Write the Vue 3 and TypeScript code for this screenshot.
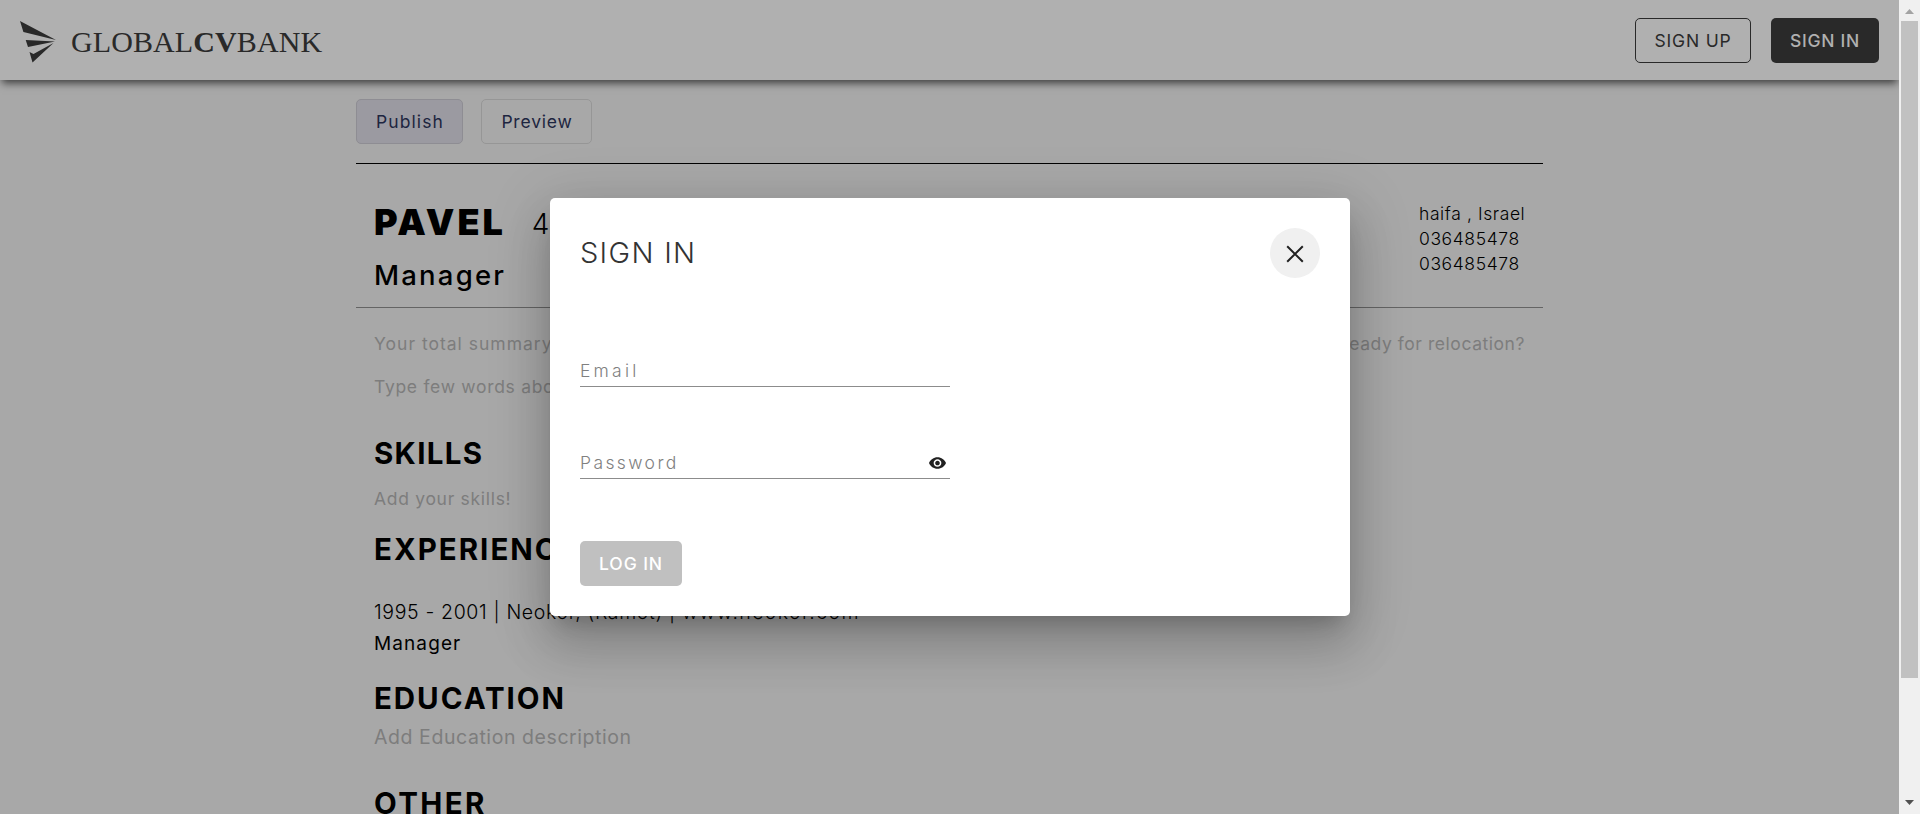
<script setup lang="ts">
import { ref } from 'vue'

const contacts = ['haifa , Israel', '036485478', '036485478']
const email = ref('')
const password = ref('')
</script>

<template>
  <div class="screen">
    <div class="page">
      <header class="topbar">
        <div class="brand">
          <svg class="mark" width="36" height="42" viewBox="0 0 36 42">
            <path d="M0 0 36 19 3.4 11ZM5.7 19 35 20.5 8 26ZM9.5 31 13.5 33 33.5 22 12.5 41.5Z" />
          </svg>
          <span class="wordmark">GLOBAL<b>CV</b>BANK</span>
        </div>
        <nav class="auth">
          <button class="btn signup">SIGN UP</button>
          <button class="btn signin">SIGN IN</button>
        </nav>
      </header>

      <main class="resume">
        <div class="tools">
          <button class="btn publish">Publish</button>
          <button class="btn preview">Preview</button>
        </div>
        <section class="person">
          <div>
            <div class="name-row"><h1>PAVEL</h1><span class="age">4</span></div>
            <p class="role">Manager</p>
          </div>
          <ul class="contacts">
            <li v-for="(line, i) in contacts" :key="i">{{ line }}</li>
          </ul>
        </section>
        <section class="body">
          <p class="hint summary"><span>Your total summary</span><span class="tail">ready for relocation?</span></p>
          <p class="hint about">Type few words about</p>
          <h2 class="skills">SKILLS</h2>
          <p class="hint add-skills">Add your skills!</p>
          <h2 class="experience">EXPERIENCE</h2>
          <p class="job">1995 - 2001 | Neokor, (Ramot) | <span class="site">www.neokor.com</span></p>
          <p class="position">Manager</p>
          <h2 class="education">EDUCATION</h2>
          <p class="hint add-education">Add Education description</p>
          <h2 class="other">OTHER</h2>
        </section>
      </main>
    </div>

    <aside class="scrollbar">
      <svg width="9" height="5" viewBox="0 0 9 5"><path fill="#a3a3a3" d="M0 5 4.5 0 9 5Z" /></svg>
      <div class="thumb"></div>
      <svg class="down" width="9" height="5" viewBox="0 0 9 5"><path fill="#505050" d="M0 0 4.5 5 9 0Z" /></svg>
    </aside>

    <form class="dialog" @submit.prevent>
      <div class="dialog-head">
        <h3>SIGN IN</h3>
        <button type="button" class="close" aria-label="Close">
          <svg width="18" height="18" viewBox="0 0 18 18"><path d="M1.2 1.2 16.8 16.8M16.8 1.2 1.2 16.8" fill="none" stroke="#212121" stroke-width="2" /></svg>
        </button>
      </div>
      <label class="field email"><input v-model="email" type="text" placeholder="Email" /></label>
      <label class="field password">
        <input v-model="password" type="password" placeholder="Password" />
        <svg width="17" height="12" viewBox="1 4.5 22 15"><path fill="#212121" d="M12 4.5C7 4.5 2.73 7.61 1 12c1.73 4.39 6 7.5 11 7.5s9.27-3.11 11-7.5c-1.73-4.39-6-7.5-11-7.5zM12 17c-2.76 0-5-2.24-5-5s2.24-5 5-5 5 2.24 5 5-2.24 5-5 5zm0-8c-1.66 0-3 1.34-3 3s1.34 3 3 3 3-1.34 3-3-1.34-3-3-3z" /></svg>
      </label>
      <button class="btn login">LOG IN</button>
    </form>
  </div>
</template>

<style>
html, body { margin: 0; overflow: hidden; }
</style>

<style scoped>
* { box-sizing: border-box; }
h1, h2, h3, p, ul { margin: 0; padding: 0; }
.screen {
  position: relative;
  display: flex;
  width: 1920px;
  height: 814px;
  overflow: hidden;
  font-family: Inter, "Liberation Sans", sans-serif;
  font-size: 17.5px;
  color: #000;
}
.page { width: 1899px; height: 814px; overflow: hidden; background: #a8a8a8; }

.topbar {
  display: flex;
  align-items: center;
  justify-content: space-between;
  height: 80px;
  padding: 1px 20px 0;
  background: #b0b0b0;
  box-shadow: 0 5px 8px -2px rgba(0, 0, 0, 0.65);
}
.brand { display: flex; align-items: center; gap: 15px; color: #292929; }
.mark { fill: #292929; margin-top: 2px; }
.wordmark { font: 30px/40px "Liberation Serif", serif; letter-spacing: 0.1px; padding-top: 2px; }
.auth { display: flex; gap: 20px; }
.btn {
  height: 45px;
  padding: 0;
  border: 1px solid transparent;
  border-radius: 5px;
  font-family: inherit;
  font-size: 17.5px;
  line-height: 43px;
  letter-spacing: 0.5px;
  text-align: center;
}
.signup { width: 116px; border-color: #292929; background: transparent; color: #292929; font-weight: 400; letter-spacing: 0.8px; }
.signin { width: 108px; background: #292929; color: #b0b0b0; font-weight: 500; letter-spacing: 0.7px; }

.resume { width: 1187px; margin-left: 356px; }
.tools { display: flex; gap: 18px; height: 84px; padding-top: 19px; border-bottom: 1px solid #000; }
.publish { width: 107px; background: #9b9aa1; border-color: #8e8d93; color: #1d2540; letter-spacing: 1.1px; text-indent: 1px; }
.preview { width: 111px; background: transparent; border-color: #969696; color: #1d2540; letter-spacing: 0.8px; text-indent: 1px; }

.person {
  display: flex;
  justify-content: space-between;
  height: 144px;
  padding: 36px 18px 0 18px;
  border-bottom: 1px solid #646464;
}
.name-row { display: flex; gap: 26px; height: 44px; }
h1 { font-size: 36px; line-height: 44px; font-weight: 900; letter-spacing: 3px; }
.age { font-size: 28px; line-height: 49px; font-weight: 300; }
.role { margin-top: 13px; font-size: 27.5px; line-height: 36px; font-weight: 500; letter-spacing: 2.2px; }
.contacts { width: 106px; padding-top: 1px; list-style: none; line-height: 25px; font-weight: 300; letter-spacing: 0.6px; white-space: nowrap; }

.body { padding: 23px 18px 0 18px; white-space: nowrap; }
.hint { line-height: 25px; letter-spacing: 0.7px; color: #7d7d7d; }
.summary { display: flex; justify-content: space-between; letter-spacing: 1px; }
.tail { letter-spacing: 0.55px; }
.about { margin-top: 18px; }
h2 { font-size: 29.5px; line-height: 36px; font-weight: 700; }
.skills { margin-top: 36px; letter-spacing: 1.3px; }
.add-skills { margin-top: 15px; }
.experience { margin-top: 20px; letter-spacing: 2px; }
.job { margin-top: 29px; font-size: 19.5px; line-height: 32px; font-weight: 300; letter-spacing: 0.65px; }
.site { letter-spacing: 1.4px; }
.position { font-size: 19px; line-height: 32px; letter-spacing: 1.1px; }
.education { margin-top: 20px; letter-spacing: 1.95px; }
.add-education { margin-top: 9px; font-size: 19.5px; letter-spacing: 0.57px; }
.other { margin-top: 35px; letter-spacing: 2.4px; }

.scrollbar { display: flex; flex-direction: column; align-items: center; width: 21px; height: 814px; padding: 9px 0; background: #f0f0f0; }
.thumb { width: 17px; height: 657px; margin-top: 7px; background: #c1c1c1; }
.down { margin-top: auto; }

.dialog {
  position: absolute;
  left: 550px;
  top: 198px;
  width: 800px;
  height: 418px;
  padding: 30px;
  border-radius: 5px;
  background: #fff;
  box-shadow: 0 14px 19px -9px rgba(0, 0, 0, 0.2), 0 30px 48px 4px rgba(0, 0, 0, 0.14), 0 11px 58px 10px rgba(0, 0, 0, 0.12);
}
.dialog-head { display: flex; justify-content: space-between; height: 50px; }
h3 { font-size: 29px; line-height: 50px; font-weight: 300; letter-spacing: 1.3px; color: #333; }
.close { display: grid; place-items: center; width: 50px; height: 50px; padding: 1px 1px 0 0; border: 0; border-radius: 50%; background: #f0f0f0; }
.field { display: flex; align-items: center; width: 370px; height: 32px; padding-right: 4px; border-bottom: 1px solid #8c8c8c; }
.field input { flex: 1; min-width: 0; height: 27px; padding: 0; border: 0; outline: 0; background: transparent; font: 300 17.5px/27px Inter, sans-serif; }
.field input::placeholder { color: #808080; opacity: 1; }
.email { margin-top: 77px; }
.email input { letter-spacing: 3.2px; }
.password { margin-top: 60px; }
.password input { letter-spacing: 2.4px; }
.login { display: block; width: 102px; margin-top: 62px; background: #c0c0c0; color: #fff; font-weight: 500; letter-spacing: 0.9px; }
</style>
